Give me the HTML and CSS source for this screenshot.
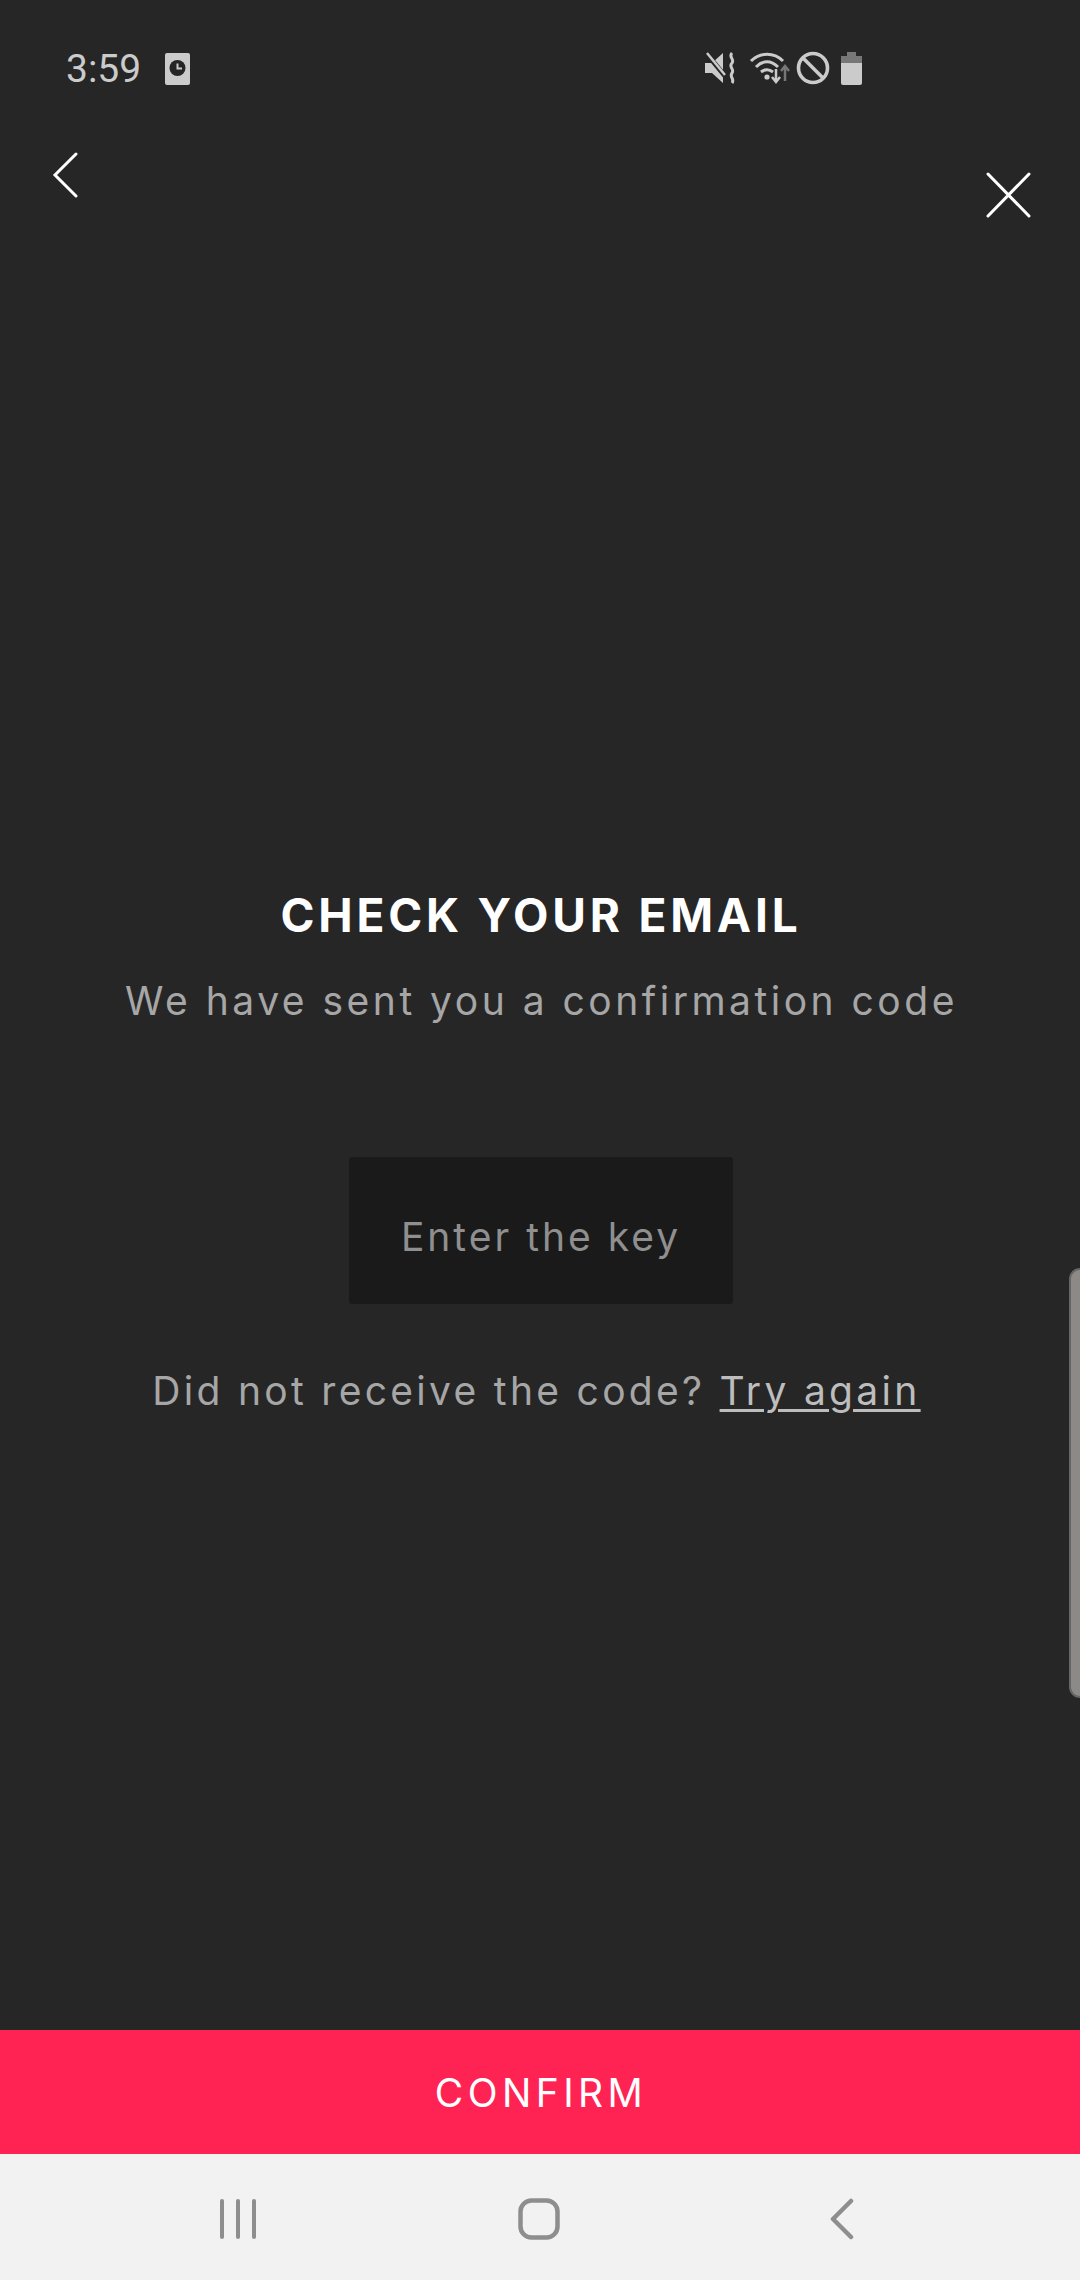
FILE: index.html
```html
<!DOCTYPE html>
<html lang="en">
<head>
<meta charset="utf-8">
<title>Check your email</title>
<link rel="stylesheet" href="styles.css">
</head>
<body>
<div class="screen">
  <header class="status">
    <div class="status-left">
      <span class="time">3:59</span>
      <svg class="ic-note" width="25" height="32" viewBox="0 0 25 32"><rect width="25" height="32" rx="2" fill="#cbcbcb"/><circle cx="12.5" cy="15" r="8" fill="#262626"/><path d="M12.5 10.5V15.5H17" fill="none" stroke="#cbcbcb" stroke-width="2"/></svg>
    </div>
    <div class="status-right">
      <svg width="32" height="32" viewBox="0 0 32 32"><path d="M1 11H8L19 1V31L8 21H1Z" fill="#cbcbcb"/><path d="M2 1L21 24" stroke="#262626" stroke-width="5"/><path d="M3 1L21 23" stroke="#cbcbcb" stroke-width="2.5"/><path d="M28 1C24 5 31 7 28 11C24 15 31 17 28 21C25 25 31 27 28 31" fill="none" stroke="#cbcbcb" stroke-width="3"/></svg>
      <svg class="ic-wifi" width="42" height="32" viewBox="0 0 42 32"><path d="M2 9C11 0 25 0 34 9M7 15C14 8 22 8 29 15M12 20C16 17 20 17 24 20" fill="none" stroke="#cbcbcb" stroke-width="3"/><circle cx="18" cy="25" r="2.6" fill="#cbcbcb"/><path d="M27 17V30M23 25L27 30L31 25" fill="none" stroke="#cbcbcb" stroke-width="2.5"/><path d="M36 29V14M32 19L36 14L40 19" fill="none" stroke="#777" stroke-width="2.5"/></svg>
      <svg class="ic-block" width="34" height="34" viewBox="0 0 34 34"><circle cx="17" cy="17" r="14.5" fill="none" stroke="#cbcbcb" stroke-width="3.6"/><path d="M7 7L27 27" stroke="#cbcbcb" stroke-width="3.6"/></svg>
      <svg class="ic-batt" width="21" height="33" viewBox="0 0 21 33"><path d="M6 0H15V4H21V11H0V4H6Z" fill="#777"/><path d="M0 11H21V31A2 2 0 0 1 19 33H2A2 2 0 0 1 0 31Z" fill="#cbcbcb"/></svg>
    </div>
  </header>

  <nav class="topbar">
    <svg class="ic-back" width="26" height="46" viewBox="0 0 26 46"><path d="M24 2L3 23L24 44" fill="none" stroke="#fff" stroke-width="3" stroke-linecap="round"/></svg>
    <svg class="ic-close" width="46" height="46" viewBox="0 0 46 46"><path d="M3 2L44 44M44 2L3 44" fill="none" stroke="#fff" stroke-width="3" stroke-linecap="round"/></svg>
  </nav>

  <main class="content">
    <h1 class="title">CHECK YOUR EMAIL</h1>
    <p class="subtitle">We have sent you a confirmation code</p>
    <div class="key-field">Enter the key</div>
    <p class="resend">Did not receive the code? <a class="resend-link">Try again</a></p>
  </main>

  <button class="confirm">CONFIRM</button>

  <footer class="navbar">
    <svg width="38" height="42" viewBox="0 0 38 42"><path d="M3 3V39M19 3V39M35 3V39" fill="none" stroke="#8e8e8e" stroke-width="4" stroke-linecap="round"/></svg>
    <svg class="nav-home" width="42" height="42" viewBox="0 0 42 42"><rect x="2.5" y="2.5" width="37" height="37" rx="11" fill="none" stroke="#8e8e8e" stroke-width="4.5"/></svg>
    <svg width="24" height="42" viewBox="0 0 24 42"><path d="M21 3L3 21L21 39" fill="none" stroke="#8e8e8e" stroke-width="4.5" stroke-linecap="round" stroke-linejoin="round"/></svg>
  </footer>

  <div class="edge-handle"></div>
</div>
</body>
</html>
```

FILE: styles.css
```css
* { box-sizing: border-box; }
html, body { margin: 0; padding: 0; }
body { font-family: "Inter", "Liberation Sans", sans-serif; background: #262626; }
.screen {
  position: relative;
  width: 1080px;
  height: 2280px;
  display: flex;
  flex-direction: column;
  background: #262626;
  overflow: hidden;
}
.status {
  height: 100px;
  flex: none;
  padding: 51px 218px 0 66px;
  display: flex;
  justify-content: space-between;
  align-items: flex-start;
}
.status-left { display: flex; align-items: center; gap: 24px; }
.time {
  font-family: "Roboto", sans-serif;
  font-size: 39px;
  line-height: 36px;
  color: #cbcbcb;
}
.status-right { display: flex; align-items: center; }
.ic-wifi { margin-left: 13px; }
.ic-block { margin-left: 5px; }
.ic-batt { margin-left: 11px; }
.topbar {
  height: 120px;
  flex: none;
  padding: 52px 49px 0 52px;
  display: flex;
  justify-content: space-between;
  align-items: flex-start;
}
.ic-close { margin-top: 20px; }
.content {
  flex: 1;
  display: flex;
  flex-direction: column;
  align-items: center;
  padding-top: 670px;
}
.title {
  margin: 0;
  font-size: 46px;
  line-height: 50px;
  font-weight: 700;
  letter-spacing: 3.8px;
  color: #fff;
  padding-left: 2px;
}
.subtitle {
  margin: 38px 0 0;
  padding-left: 3px;
  font-size: 39px;
  line-height: 46px;
  letter-spacing: 3.5px;
  color: #a6a6a6;
}
.key-field {
  margin: 133px 0 0 2px;
  width: 384px;
  height: 147px;
  display: flex;
  align-items: center;
  justify-content: center;
  padding-top: 12px;
  background: #1a1a1a;
  border-radius: 3px;
  font-size: 39px;
  letter-spacing: 3px;
  color: #8f8f8f;
}
.resend {
  margin: 64px 0 0;
  padding-right: 7px;
  font-size: 39px;
  line-height: 46px;
  letter-spacing: 3.3px;
  color: #a6a6a6;
}
.resend-link {
  color: #bdbdbd;
  text-decoration: underline;
  text-underline-offset: 4px;
  text-decoration-thickness: 3px;
}
.confirm {
  flex: none;
  height: 124px;
  width: 100%;
  border: 0;
  padding: 0 0 0 2px;
  background: #ff2353;
  color: #fff;
  font-family: inherit;
  font-size: 39px;
  letter-spacing: 4.4px;
}
.navbar {
  flex: none;
  height: 126px;
  padding: 3px 0 0 219px;
  display: flex;
  align-items: center;
  background: #f2f2f2;
}
.nav-home { margin: 0 270px 0 261px; }
.edge-handle {
  position: absolute;
  right: 0;
  top: 1268px;
  width: 11px;
  height: 430px;
  background: #8c8986;
  border: 2px solid #666;
  border-right: 0;
  border-radius: 11px 0 0 11px;
}
```
